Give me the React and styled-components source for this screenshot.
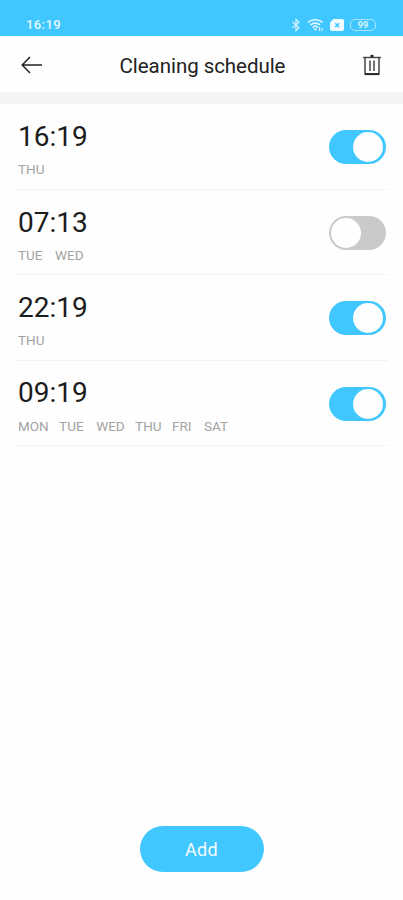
import React, { useState } from "react";
import styled, { createGlobalStyle } from "styled-components";

const initialSchedules = [
  { id: 1, time: "16:19", days: ["THU"], enabled: true },
  { id: 2, time: "07:13", days: ["TUE", "WED"], enabled: false },
  { id: 3, time: "22:19", days: ["THU"], enabled: true },
  {
    id: 4,
    time: "09:19",
    days: ["MON", "TUE", "WED", "THU", "FRI", "SAT"],
    enabled: true,
  },
];

const BluetoothIcon = () => (
  <svg width="10" height="14" viewBox="0 0 10 14" fill="none">
    <path
      d="M1.5 4 8 9.8 5 12.6V1.4L8 4.2 1.5 10"
      stroke="#d4f1ff"
      strokeWidth="1.2"
    />
  </svg>
);

const WifiIcon = () => (
  <svg width="17" height="14" viewBox="0 0 17 14" fill="none">
    <path
      d="M1 4.4c4-3.6 10.5-3.6 14.5 0M3.4 7c2.800-2.500 7-2.500 9.700 0M5.600 9.500c1.600-1.500 3.800-1.500 5.300 0"
      stroke="#e6f7ff"
      strokeWidth="1.6"
    />
    <path d="m6.500 10.800 1.800 2 1.800-2c-1-.9-2.600-.9-3.600 0Z" fill="#e6f7ff" />
    <path d="M12.500 9v4M15 10v3" stroke="#e6f7ff" strokeWidth="1.2" />
  </svg>
);

const SimIcon = () => (
  <svg width="14" height="12" viewBox="0 0 14 12">
    <path
      d="M3.500 0H12a2 2 0 0 1 2 2v8a2 2 0 0 1-2 2H2a2 2 0 0 1-2-2V3.500Z"
      fill="#f2fbff"
    />
    <path
      d="m5.300 4.300 3.800 3.800m0-3.800L5.300 8.100"
      stroke="#41c7ff"
      strokeWidth="1.5"
    />
  </svg>
);

const BackIcon = () => (
  <svg width="22" height="18" viewBox="0 0 22 18" fill="none">
    <path d="M9 1 1.200 9 9 17M1.200 9H21" stroke="#222" strokeWidth="1.5" />
  </svg>
);

const TrashIcon = () => (
  <svg width="20" height="22" viewBox="0 0 20 22" fill="none">
    <path d="M1 3.500h18" stroke="#444" strokeWidth="1.4" />
    <path d="M8.500 2h3" stroke="#222" strokeWidth="2.2" />
    <path d="M3 3.500v16.500h14V3.500" stroke="#444" strokeWidth="1.5" />
    <path d="M3 20.200h14" stroke="#222" strokeWidth="1.8" />
    <path d="M8 6.500v10.500M12 6.500v10.500" stroke="#555" strokeWidth="1.6" />
  </svg>
);

const ScheduleItem = ({ item, onToggle }) => (
  <ScheduleRow>
    <ScheduleInfo>
      <ScheduleTime>{item.time}</ScheduleTime>
      <ScheduleDays>
        {item.days.map((day) => (
          <ScheduleDay key={day} $spaced={day === "WED" || day === "SAT"}>
            {day}
          </ScheduleDay>
        ))}
      </ScheduleDays>
    </ScheduleInfo>
    <Switch
      role="switch"
      aria-checked={item.enabled}
      $on={item.enabled}
      onClick={() => onToggle(item.id)}
    >
      <SwitchThumb $on={item.enabled} />
    </Switch>
  </ScheduleRow>
);

const App = () => {
  const [schedules, setSchedules] = useState(initialSchedules);

  const handleToggle = (id) => {
    setSchedules(
      schedules.map((item) =>
        item.id === id ? { ...item, enabled: !item.enabled } : item
      )
    );
  };

  return (
    <>
      <GlobalStyle />
      <Screen>
        <StatusBar>
          <StatusTime>16:19</StatusTime>
          <StatusIcons>
            <BluetoothIcon />
            <WifiIcon />
            <SimIcon />
            <Battery>
              <BatteryLevel>99</BatteryLevel>
            </Battery>
          </StatusIcons>
        </StatusBar>
        <Header>
          <IconButton>
            <BackIcon />
          </IconButton>
          <Title>Cleaning schedule</Title>
          <IconButton>
            <TrashIcon />
          </IconButton>
        </Header>
        <ScheduleList>
          {schedules.map((item) => (
            <ScheduleItem key={item.id} item={item} onToggle={handleToggle} />
          ))}
        </ScheduleList>
        <Footer>
          <AddButton>Add</AddButton>
        </Footer>
      </Screen>
    </>
  );
};

const GlobalStyle = createGlobalStyle`
  * {
    box-sizing: border-box;
  }
  body {
    margin: 0;
    font-family: Roboto, "Liberation Sans", sans-serif;
    background: #fff;
  }
  button {
    font-family: inherit;
    border: none;
    padding: 0;
    cursor: pointer;
  }
  svg {
    display: block;
  }
`;

const Screen = styled.div`
  display: flex;
  flex-direction: column;
  height: 100vh;
  background: #fefefe;
`;

const StatusBar = styled.div`
  display: flex;
  flex-shrink: 0;
  justify-content: space-between;
  height: 36px;
  padding: 13px 27px 0 26px;
  background: #41c7ff;
`;

const StatusTime = styled.span`
  font-size: 13px;
  font-weight: 500;
  line-height: 24px;
  letter-spacing: 0.4px;
  color: #e6f7ff;
`;

const StatusIcons = styled.div`
  display: flex;
  align-items: center;
  height: 24px;
  gap: 6px;
`;

const Battery = styled.div`
  display: flex;
  align-items: center;
  justify-content: center;
  width: 26px;
  height: 12px;
  border: 1.5px solid #a9e4ff;
  border-radius: 5px;
`;

const BatteryLevel = styled.span`
  font-size: 9px;
  font-weight: 700;
  line-height: 9px;
  color: #d9f3ff;
`;

const Header = styled.header`
  display: flex;
  flex-shrink: 0;
  align-items: center;
  justify-content: space-between;
  height: 68px;
  padding: 1px 21px 0;
  border-bottom: 12px solid #f4f4f4;
`;

const IconButton = styled.button`
  background: none;
`;

const Title = styled.h1`
  margin: 3px 0 0;
  font-size: 20.5px;
  font-weight: 400;
  line-height: 24px;
  letter-spacing: -0.05px;
  color: #222;
`;

const ScheduleList = styled.div`
  flex: 1;
  padding: 0.6px 15px 0 17px;
`;

const ScheduleRow = styled.div`
  display: flex;
  justify-content: space-between;
  height: 85.4px;
  padding: 15.6px 2px 0 1px;
  border-bottom: 1px solid #f3f3f3;
`;

const ScheduleInfo = styled.div`
  display: flex;
  flex-direction: column;
`;

const ScheduleTime = styled.span`
  font-size: 28px;
  line-height: 33px;
  color: #1c1c1c;
`;

const ScheduleDays = styled.div`
  display: flex;
  gap: 10.4px;
  margin-top: 8.2px;
`;

const ScheduleDay = styled.span`
  margin-left: ${(props) => (props.$spaced ? "2.2px" : "0")};
  font-size: 13.5px;
  line-height: 16px;
  color: #a3a3a3;
`;

const Switch = styled.button`
  display: flex;
  align-items: center;
  justify-content: ${(props) => (props.$on ? "flex-end" : "flex-start")};
  width: 57px;
  height: 34px;
  margin-top: 10.2px;
  padding: 0 2px;
  border-radius: 17px;
  background: ${(props) => (props.$on ? "#41c7ff" : "#cacaca")};
`;

const SwitchThumb = styled.span`
  width: 30px;
  height: 30px;
  margin-right: ${(props) => (props.$on ? "1px" : "0")};
  border-radius: 50%;
  background: #fefefe;
`;

const Footer = styled.footer`
  display: flex;
  justify-content: center;
  padding-bottom: 28px;
`;

const AddButton = styled.button`
  width: 124px;
  height: 46px;
  border-radius: 23px;
  background: #41c7ff;
  font-size: 18px;
  letter-spacing: 0.3px;
  color: #f4fbff;
`;

export default App;
